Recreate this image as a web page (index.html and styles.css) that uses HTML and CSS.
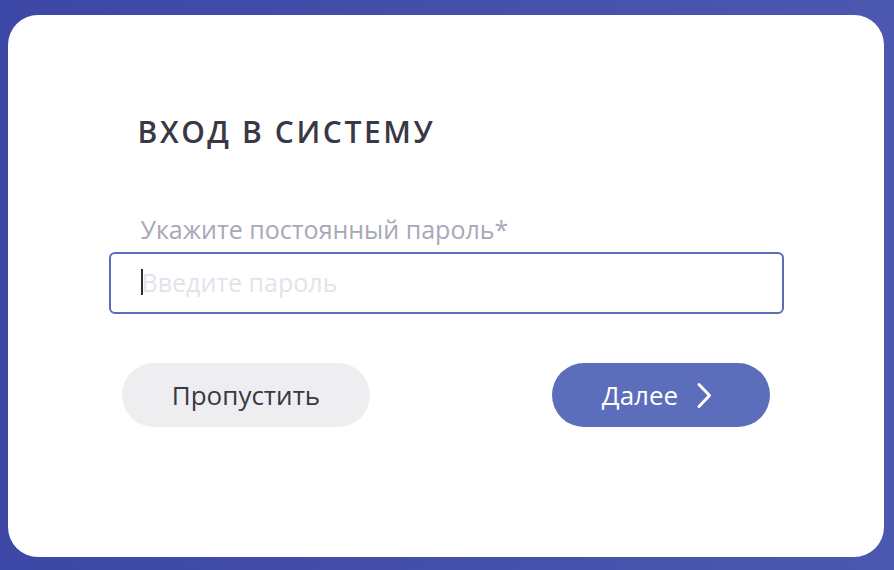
FILE: index.html
```html
<!DOCTYPE html>
<html lang="ru">
<head>
<meta charset="utf-8">
<title>Вход в систему</title>
<link rel="stylesheet" href="styles.css">
</head>
<body>
<div class="page">
  <div class="card">
    <h1 class="title">ВХОД В СИСТЕМУ</h1>
    <div class="field">
      <label class="label" for="pwd">Укажите постоянный пароль*</label>
      <div class="input"><span class="caret"></span><span class="placeholder">Введите пароль</span></div>
    </div>
    <div class="actions">
      <button class="btn btn-skip">Пропустить</button>
      <button class="btn btn-next">Далее
        <svg class="chev" width="17" height="27" viewBox="0 0 17 27"><path d="M3 2.5 L13.5 13.5 L3 24.5" fill="none" stroke="#fff" stroke-width="3" stroke-linecap="round" stroke-linejoin="round"/></svg>
      </button>
    </div>
  </div>
</div>
</body>
</html>
```
FILE: styles.css
```css
html, body { margin: 0; padding: 0; }
body {
  width: 894px; height: 570px; overflow: hidden;
  font-family: "Open Sans", Lato, sans-serif;
}
.page {
  width: 894px; height: 570px; box-sizing: border-box;
  padding: 15px 10px 13px 8px;
  background: linear-gradient(90deg, #3d47a5 0%, #4651ab 60%, #4c58b0 100%);
}
.card {
  height: 100%; box-sizing: border-box;
  background: #fff; border-radius: 30px;
  padding: 97px 0 0 0;
  display: flex; flex-direction: column; align-items: center;
}
.title {
  width: 675px; box-sizing: border-box; margin: 0; padding-left: 29px;
  font-size: 30px; font-weight: 600; letter-spacing: 2.6px;
  color: #393844; line-height: 40px;
}
.field { width: 675px; margin-top: 61px; }
.label {
  display: block; padding-left: 32px;
  font-size: 25px; color: #a9a8b9; line-height: 32px;
}
.input {
  margin-top: 7px; height: 62px; box-sizing: border-box;
  border: 2px solid #5b6cbb; border-radius: 6px;
  display: flex; align-items: center; padding-left: 30px; padding-bottom: 2px;
}
.caret { width: 2px; height: 26px; background: #2e2d38; margin-right: -1px; }
.placeholder {
  font-family: "Open Sans", sans-serif; font-size: 25px; color: #e3e3ec;
}
.actions {
  width: 648px; margin-top: 49px;
  display: flex; justify-content: space-between;
}
.btn {
  height: 64px; border: none; border-radius: 32px;
  font-family: "Open Sans", Lato, sans-serif; font-size: 26px;
  display: flex; align-items: center; justify-content: center; padding: 0;
}
.btn-skip { width: 248px; background: #eeeef1; color: #393844; }
.btn-next { width: 218px; background: #5b6dbb; color: #fff; gap: 18px; padding-right: 7px; }
.chev { display: block; }
```
